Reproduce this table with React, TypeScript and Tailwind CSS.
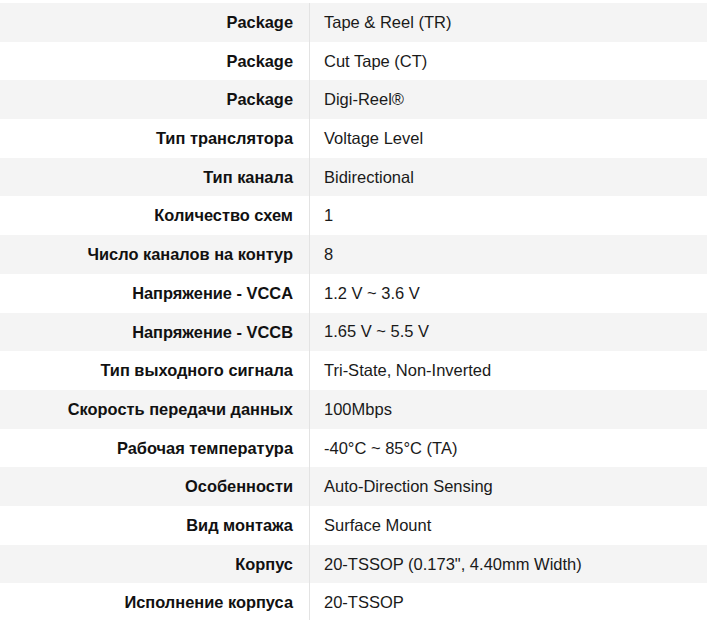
const ROWS: [string, string][] = [
  ["Package", "Tape & Reel (TR)"],
  ["Package", "Cut Tape (CT)"],
  ["Package", "Digi-Reel®"],
  ["Тип транслятора", "Voltage Level"],
  ["Тип канала", "Bidirectional"],
  ["Количество схем", "1"],
  ["Число каналов на контур", "8"],
  ["Напряжение - VCCA", "1.2 V ~ 3.6 V"],
  ["Напряжение - VCCB", "1.65 V ~ 5.5 V"],
  ["Тип выходного сигнала", "Tri-State, Non-Inverted"],
  ["Скорость передачи данных", "100Mbps"],
  ["Рабочая температура", "-40°C ~ 85°C (TA)"],
  ["Особенности", "Auto-Direction Sensing"],
  ["Вид монтажа", "Surface Mount"],
  ["Корпус", "20-TSSOP (0.173\", 4.40mm Width)"],
  ["Исполнение корпуса", "20-TSSOP"],
];

export default function App() {
  return (
    <div
      className="w-[707px] h-[620px] overflow-hidden bg-white pt-[3px] text-[16.5px] text-[#1a1a1a]"
      style={{ fontFamily: '"Liberation Sans", Arial, sans-serif' }}
    >
      {ROWS.map(([label, value], i) => (
        <div
          key={i}
          className={`flex h-[38.7px] items-center ${i % 2 === 0 ? "bg-[#f4f4f4]" : "bg-white"}`}
        >
          <div className="flex h-full w-[310px] shrink-0 items-center justify-end border-r border-[#e3e3e3] pr-[16px] text-[16.4px] font-bold text-[#111]">
            {label}
          </div>
          <div className="pl-[14px]">{value}</div>
        </div>
      ))}
    </div>
  );
}
